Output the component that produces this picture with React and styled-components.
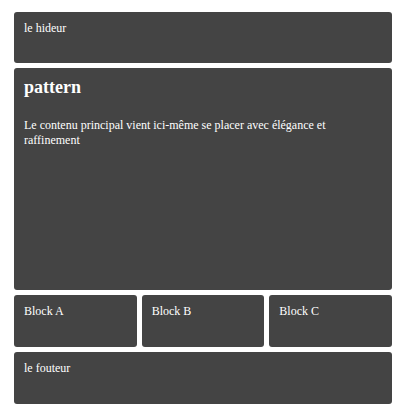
import styled, { createGlobalStyle } from 'styled-components';

const GlobalStyle = createGlobalStyle`
    body{
        margin: 0;
        background: #fff;
        font-family: "Liberation Serif", "Times New Roman", serif;
    }
`;

export default function App(){
    const blocks = ["Block A", "Block B", "Block C"];
    return(
        <>
            <GlobalStyle />
            <Page>
                <Box>le hideur</Box>
                <Box>
                    <Title>pattern</Title>
                    <Text>Le contenu principal vient ici-même se placer avec élégance et raffinement</Text>
                </Box>
                <BlockRow>
                    {blocks.map(b => <Box key={b}>{b}</Box>)}
                </BlockRow>
                <Box>le fouteur</Box>
            </Page>
        </>
    );
}

const Page = styled.div`
    display: grid;
    grid-template-rows: 51px 222px 52px 52px;
    row-gap: 5px;
    width: 378px;
    padding: 12px 0 0 14px;
`;

const Box = styled.div`
    background: #444;
    color: #fff;
    border-radius: 3px;
    padding: 9px 10px;
    font-size: 12px;
    box-sizing: border-box;
`;

const BlockRow = styled.div`
    display: grid;
    grid-template-columns: repeat(3, 1fr);
    column-gap: 5px;
`;

const Title = styled.h1`
    margin: 0 0 20px;
    font-size: 18px;
    font-weight: bold;
`;

const Text = styled.p`
    margin: 0;
`;
